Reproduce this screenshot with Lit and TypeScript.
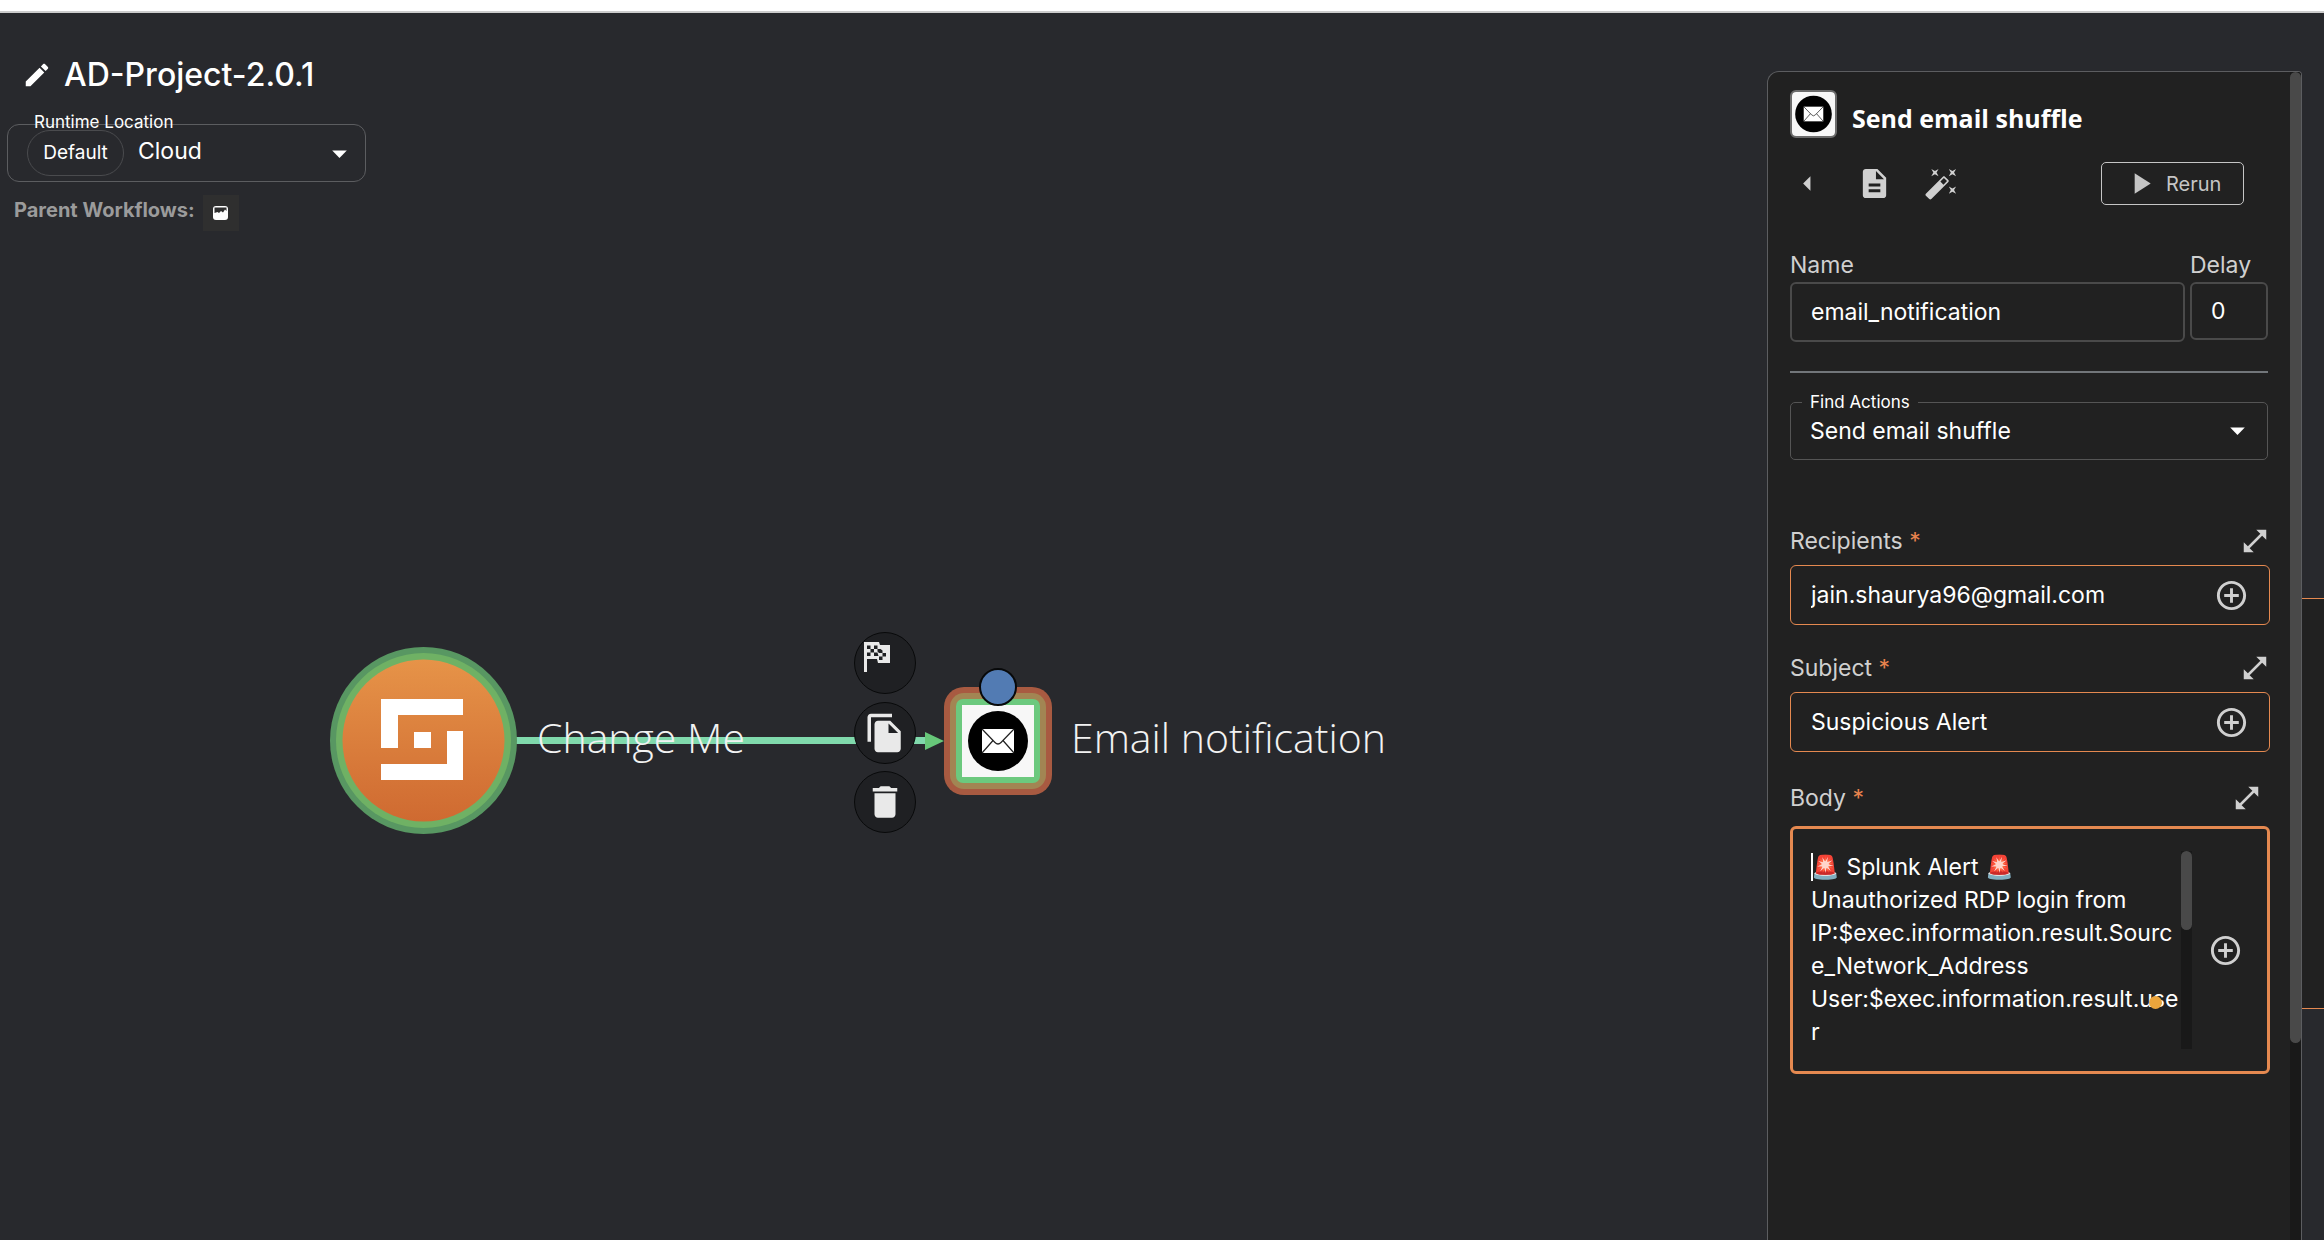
import { LitElement, html, css } from "lit";
import { customElement, property } from "lit/decorators.js";

const ICONS = {
  edit: "M3 17.25V21h3.75L17.81 9.94l-3.75-3.75L3 17.25zM20.71 7.04c.39-.39.39-1.02 0-1.41l-2.34-2.34c-.39-.39-1.02-.39-1.41 0l-1.83 1.83 3.75 3.75 1.83-1.83z",
  description: "M14 2H6c-1.1 0-1.99.9-1.99 2L4 20c0 1.1.89 2 1.99 2H18c1.1 0 2-.9 2-2V8l-6-6zm2 16H8v-2h8v2zm0-4H8v-2h8v2zm-3-5V3.5L18.5 9H13z",
  wand: "M7.5 5.6 10 7 8.6 4.5 10 2 7.5 3.4 5 2l1.4 2.5L5 7zm12 9.8L17 14l1.4 2.5L17 19l2.5-1.4L22 19l-1.4-2.5L22 14zM22 2l-2.5 1.4L17 2l1.4 2.5L17 7l2.5-1.4L22 7l-1.4-2.5zm-7.63 5.29c-.39-.39-1.02-.39-1.41 0L1.29 18.96c-.39.39-.39 1.02 0 1.41l2.34 2.34c.39.39 1.02.39 1.41 0L16.7 11.05c.39-.39.39-1.02 0-1.41l-2.33-2.35zm-1.03 5.49-2.12-2.12 2.44-2.44 2.12 2.12-2.44 2.44z",
  back: "M14 7l-5 5 5 5V7z",
  add: "M13 7h-2v4H7v2h4v4h2v-4h4v-2h-4V7zm-1-5C6.48 2 2 6.48 2 12s4.48 10 10 10 10-4.48 10-10S17.52 2 12 2zm0 18c-4.41 0-8-3.59-8-8s3.59-8 8-8 8 3.59 8 8-3.59 8-8 8z",
  play: "M8 5v14l11-7z",
  expand: "M21 11V3h-8l3.29 3.29-10 10L3 13v8h8l-3.29-3.29 10-10z",
  down: "M7 10l5 5 5-5z",
  trash: "M6 19c0 1.1.9 2 2 2h8c1.1 0 2-.9 2-2V7H6v12zM19 4h-3.5l-1-1h-5l-1 1H5v2h14V4z",
  copy: "M16 1H4c-1.1 0-2 .9-2 2v14h2V3h12V1zm-1 4l6 6v10c0 1.1-.9 2-2 2H7.99C6.89 23 6 22.1 6 21l.01-14c0-1.1.89-2 1.99-2h7zm-1 7h5.5L14 6.5V12z",
};

@customElement("mui-icon")
class MuiIcon extends LitElement {
  @property() name: keyof typeof ICONS = "edit";
  static styles = css`
    :host { display: inline-flex; width: 35px; height: 35px; flex: none; }
    svg { width: 100%; height: 100%; fill: currentColor; }
  `;
  render() {
    return html`<svg viewBox="0 0 24 24" aria-hidden="true"><path d=${ICONS[this.name]} /></svg>`;
  }
}

@customElement("mail-logo")
class MailLogo extends LitElement {
  static styles = css`
    :host { display: block; }
    svg { display: block; width: 100%; height: 100%; }
  `;
  render() {
    return html`<svg viewBox="0 0 72 72" preserveAspectRatio="xMidYMid slice" aria-hidden="true">
      <rect width="72" height="72" fill="#f7f7f7" />
      <circle cx="36" cy="36" r="30" fill="#000" />
      <rect x="20" y="24" width="32" height="24" fill="#fff" />
      <path d="M20 24 L33 37.500 Q36 40.500 39 37.500 L52 24 M20 48 L31 35.500 M52 48 L41 35.500" fill="none" stroke="#222" stroke-width="1.200" />
    </svg>`;
  }
}

@customElement("workflow-canvas")
class WorkflowCanvas extends LitElement {
  static styles = css`
    :host { display: block; position: absolute; inset: 0; overflow: hidden; }
    .edge, .start, .mail, .port, .label, .tool { position: absolute; }
    .edge { left: 516px; top: 718px; width: 428px; height: 20px; }
    .start { left: 330px; top: 634px; width: 187px; height: 187px; }
    .mail { left: 944px; top: 674px; width: 108px; height: 108px; }
    .port { left: 979px; top: 655px; width: 38px; height: 38px; box-sizing: border-box; border: 2px solid #08090a; border-radius: 50%; background: #527bb3; }
    .label { font: 300 41px/60px "Open Sans", sans-serif; color: #f2f2f2; white-space: nowrap; top: 694px; }
    .label-start { left: 537px; }
    .label-mail { left: 1071px; }
    .tool { left: 854px; width: 62px; height: 62px; box-sizing: border-box; border: 1px solid #08090a; border-radius: 50%; background: #1f2023; color: #e9e9e9; padding: 0; display: grid; place-items: center; }
    .tool mui-icon { width: 42px; height: 42px; }
    .flag { top: 619px; place-items: start; }
    .flag svg { width: 26px; height: 30px; margin: 9px; }
    .copy { top: 689px; }
    .trash { top: 758px; }
  `;
  render() {
    return html`
      <svg class="edge" viewBox="0 0 428 20">
        <path d="M0 9.500H412" stroke="#80d9ac" stroke-width="7" />
        <path d="M409 1L428 10L409 19Z" fill="#67c779" />
      </svg>
      <svg class="start" viewBox="0 0 187 187">
        <defs><linearGradient id="g" x1="0" y1="0" x2="0" y2="1"><stop offset="0" stop-color="#e69348" /><stop offset="1" stop-color="#cf6a31" /></linearGradient></defs>
        <circle cx="93.500" cy="93.500" r="93.500" fill="#589762" />
        <circle cx="93.500" cy="93.500" r="87.500" fill="#6fb164" />
        <circle cx="93.500" cy="93.500" r="81" fill="url(#g)" />
        <path fill="#fff" d="M51 52H133V68H68V101H51ZM84 85H101V101H84ZM117 84H133V133H51V117H117Z" />
      </svg>
      <span class="label label-start">Change Me</span>
      <span class="label label-mail">Email notification</span>
      <svg class="mail" viewBox="0 0 108 108">
        <rect width="108" height="108" rx="20" fill="#a85a41" />
        <rect x="6" y="6" width="96" height="96" rx="14" fill="#a28553" />
        <rect x="12" y="12" width="84" height="84" rx="7" fill="#6cc97e" />
        <foreignObject x="18" y="18" width="72" height="72"><mail-logo></mail-logo></foreignObject>
      </svg>
      <span class="port"></span>
      <button class="tool flag" aria-label="Set as start node">
        <svg viewBox="0 0 26 30" aria-hidden="true">
          <path fill="#e9e9e9" d="M0 0h15l1 3h10v18H14l-1-4H3v13H0z" />
          <path fill="#1f2023" d="M3 3.500h3.500v3.500H3zM10 3.500h3.500v3.500H10zM6.500 7H10v3.500H6.500zM13.500 7h3l2 1.500v2.500h-3.500l-1.500-1.500zM3 10.500h3.500V14H3zM10 10.500h3.500l1 3.500H10zM18.500 11H22v3.500h-3.500zM15 14.500h3.500V18H15z" />
        </svg>
      </button>
      <button class="tool copy" aria-label="Duplicate node"><mui-icon name="copy"></mui-icon></button>
      <button class="tool trash" aria-label="Delete node"><mui-icon name="trash"></mui-icon></button>
    `;
  }
}

@customElement("action-panel")
class ActionPanel extends LitElement {
  static styles = css`
    :host { display: flex; box-sizing: border-box; background: #212121; border: 1px solid #5c5d60; border-bottom: 0; border-radius: 12px 4px 0 0; overflow: hidden; color: #d0d0d0; font: 400 23px/30px Inter, sans-serif; }
    * { box-sizing: border-box; }
    button { background: none; border: 0; padding: 0; color: inherit; font: inherit; display: inline-flex; }
    input, textarea, select { background: none; border: 0; outline: 0; padding: 0; margin: 0; color: #fff; font: inherit; min-width: 0; resize: none; appearance: none; }
    .body { flex: 1; min-width: 0; padding: 18px 22px 0 22px; }
    .track { width: 11px; background: #191919; }
    .thumb { height: 971px; background: #494949; border-radius: 6px; }
    .head { display: flex; gap: 15px; align-items: flex-start; }
    .logo { width: 47px; height: 48px; border: 2px solid #6b6b6b; border-radius: 6px; overflow: hidden; }
    h2 { margin: 10px 0 0; font: 700 25px/36px "Open Sans", sans-serif; color: #fff; }
    .bar { display: flex; align-items: center; margin-top: 24px; padding-right: 24px; }
    .bar button + button { margin-left: 32px; }
    .bar .rerun { margin-left: auto; width: 143px; height: 43px; border: 1px solid #c5c5c5; border-radius: 5px; align-items: center; gap: 8px; padding-left: 21px; font-size: 20px; color: #c5c5c5; }
    .row { display: grid; grid-template-columns: 1fr 78px; column-gap: 5px; margin-top: 45px; align-items: start; }
    label { display: block; }
    .row input { width: 100%; height: 60px; border: 2px solid #4a4a4a; border-radius: 6px; padding: 0 19px; margin-top: 2px; }
    .row .short { height: 58px; }
    hr { border: 0; height: 2px; background: #72767a; margin: 29px 0 19px; }
    .find { border: 1px solid #555; border-radius: 5px; margin: 0; padding: 0 0 10px 19px; height: 68px; display: flex; align-items: center; }
    .find legend { font-size: 17px; line-height: 20px; color: #fff; padding: 0 8px; margin-left: -8px; }
    .find select { flex: 1; height: 40px; }
    .find mui-icon { color: #fff; margin-right: 12px; }
    .params { margin-right: -2px; }
    .cap { display: flex; justify-content: space-between; align-items: center; height: 30px; }
    .cap mui-icon { width: 30px; height: 30px; }
    .star { color: #e8834e; }
    .line { display: flex; align-items: center; height: 60px; border: 1px solid #e58950; border-radius: 6px; padding: 0 20px; }
    .line input { flex: 1; height: 56px; }
    .area { position: relative; display: flex; align-items: center; height: 248px; border: 3px solid #e58950; border-radius: 6px; padding: 0 24px 0 18px; }
    .area textarea { flex: 1; height: 198px; line-height: 33px; overflow: hidden; }
    .mini { width: 11px; height: 198px; background: #191919; margin-right: 16px; }
    .mini div { height: 79px; background: #494949; border-radius: 6px; }
    .caret { position: absolute; left: 18px; top: 24px; width: 2px; height: 28px; background: #fff; }
    .dot { position: absolute; left: 356px; top: 167px; width: 13px; height: 13px; border-radius: 50%; background: #eba53c; }
    .g1 { margin-top: 66px; margin-bottom: 9px; }
    .g2 { margin-top: 28px; margin-bottom: 9px; }
    .g3 { margin-top: 31px; margin-bottom: 13px; padding-right: 8px; }
  `;
  render() {
    return html`
      <div class="body">
        <div class="head"><mail-logo class="logo"></mail-logo><h2>Send email shuffle</h2></div>
        <div class="bar">
          <button aria-label="Back"><mui-icon name="back"></mui-icon></button>
          <button aria-label="Documentation"><mui-icon name="description"></mui-icon></button>
          <button aria-label="Autofill"><mui-icon name="wand"></mui-icon></button>
          <button class="rerun"><mui-icon name="play"></mui-icon>Rerun</button>
        </div>
        <div class="row">
          <label>Name<input value="email_notification" /></label>
          <label>Delay<input class="short" value="0" /></label>
        </div>
        <hr />
        <fieldset class="find">
          <legend><label for="action">Find Actions</label></legend>
          <select id="action"><option>Send email shuffle</option></select>
          <mui-icon name="down"></mui-icon>
        </fieldset>
        <div class="params">
          <div class="cap g1"><label for="to">Recipients <span class="star">*</span></label><button aria-label="Expand recipients"><mui-icon name="expand"></mui-icon></button></div>
          <div class="line"><input id="to" value="jain.shaurya96@gmail.com" /><button aria-label="Add recipient value"><mui-icon name="add"></mui-icon></button></div>
          <div class="cap g2"><label for="sub">Subject <span class="star">*</span></label><button aria-label="Expand subject"><mui-icon name="expand"></mui-icon></button></div>
          <div class="line"><input id="sub" value="Suspicious Alert" /><button aria-label="Add subject value"><mui-icon name="add"></mui-icon></button></div>
          <div class="cap g3"><label for="msg">Body <span class="star">*</span></label><button aria-label="Expand body"><mui-icon name="expand"></mui-icon></button></div>
          <div class="area">
            <textarea id="msg" .value=${"🚨 Splunk Alert 🚨\nUnauthorized RDP login from IP:$exec.information.result.Source_Network_Address\nUser:$exec.information.result.user"}></textarea>
            <div class="mini"><div></div></div>
            <button aria-label="Add body value"><mui-icon name="add"></mui-icon></button>
            <span class="caret"></span><span class="dot"></span>
          </div>
        </div>
      </div>
      <div class="track"><div class="thumb"></div></div>
    `;
  }
}

@customElement("app-root")
class AppRoot extends LitElement {
  static styles = css`
    :host { display: flex; flex-direction: column; min-height: 100vh; background: #28292d; color: #fff; font: 400 23px/30px Inter, sans-serif; overflow: hidden; }
    * { box-sizing: border-box; }
    .strip { height: 13px; background: #fff; border-bottom: 2px solid #ccc; }
    main { flex: 1; position: relative; display: grid; grid-template-columns: 1fr 535px 22px; }
    .info { position: relative; padding: 42px 0 0 7px; }
    .title { display: flex; align-items: center; gap: 12px; padding-left: 15px; }
    .title button { background: none; border: 0; padding: 0; color: #fff; display: flex; }
    .title mui-icon { width: 30px; height: 30px; }
    h1 { margin: 0; font: 500 32px/40px Inter, sans-serif; }
    .runtime { width: 359px; margin-top: 29px; height: 58px; position: relative; display: flex; align-items: center; border: 1px solid #5c5d60; border-radius: 12px; padding-left: 19px; }
    .runtime label { position: absolute; left: 26px; top: -15px; font-size: 17px; line-height: 24px; }
    .chip { width: 97px; height: 46px; border: 1px solid #4a4b4e; border-radius: 23px; font-size: 19px; display: grid; place-items: center; }
    .runtime select { flex: 1; appearance: none; border: 0; background: none; color: #fff; font: inherit; padding: 0 0 4px 14px; }
    .runtime mui-icon { margin-right: 8px; }
    .parents { display: flex; align-items: flex-start; gap: 8px; margin: 13px 0 0 7px; color: #9b9b9b; font-weight: 700; font-size: 20px; }
    .parents button { width: 36px; height: 36px; border: 0; background: #2f2f2f; padding: 0; display: grid; place-items: center; }
    .parents svg { width: 15px; height: 14px; }
    action-panel { margin-top: 58px; position: relative; }
    .peek { margin-top: 585px; height: 411px; background: #212121; border: 1px solid #e58950; border-width: 1px 0; position: relative; }
  `;
  render() {
    return html`
      <div class="strip"></div>
      <main>
        <workflow-canvas></workflow-canvas>
        <section class="info">
          <div class="title"><button aria-label="Edit workflow"><mui-icon name="edit"></mui-icon></button><h1>AD-Project-2.0.1</h1></div>
          <div class="runtime">
            <label for="loc">Runtime Location</label>
            <span class="chip">Default</span>
            <select id="loc"><option>Cloud</option></select>
            <mui-icon name="down"></mui-icon>
          </div>
          <div class="parents"><span>Parent Workflows:</span>
            <button aria-label="Open parent workflow"><svg viewBox="0 0 15 14" aria-hidden="true"><rect width="15" height="14" rx="3" fill="#fff" /><path d="M1.500 1.500h12V5l-1.500-1.500L10 6.500 8 5 6 7 4.500 6 1.500 7z" fill="#2f2f2f" /></svg></button>
          </div>
        </section>
        <action-panel></action-panel>
        <div class="peek"></div>
      </main>
    `;
  }
}
